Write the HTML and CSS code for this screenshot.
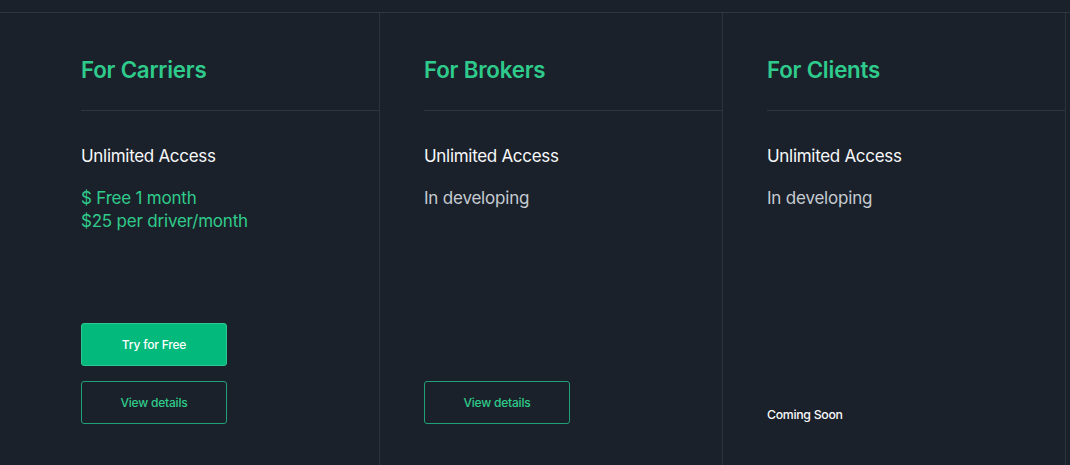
FILE: index.html
```html
<!DOCTYPE html>
<html lang="en">
<head>
<meta charset="utf-8">
<title>Pricing</title>
<link rel="stylesheet" href="styles.css">
</head>
<body>
<div class="page">
  <section class="plans">
    <div class="plan">
      <div class="plan-head"><h2 class="plan-title">For Carriers</h2></div>
      <div class="plan-body">
        <p class="plan-access">Unlimited Access</p>
        <p class="plan-price">$ Free 1 month<br>$25 per driver/month</p>
      </div>
      <div class="plan-actions">
        <a class="btn btn-primary" href="#">Try for Free</a>
        <a class="btn btn-outline" href="#">View details</a>
      </div>
    </div>
    <div class="plan">
      <div class="plan-head"><h2 class="plan-title">For Brokers</h2></div>
      <div class="plan-body">
        <p class="plan-access">Unlimited Access</p>
        <p class="plan-status">In developing</p>
      </div>
      <div class="plan-actions">
        <a class="btn btn-outline" href="#">View details</a>
      </div>
    </div>
    <div class="plan">
      <div class="plan-head"><h2 class="plan-title">For Clients</h2></div>
      <div class="plan-body">
        <p class="plan-access">Unlimited Access</p>
        <p class="plan-status">In developing</p>
      </div>
      <div class="plan-actions">
        <span class="plan-soon">Coming Soon</span>
      </div>
    </div>
  </section>
</div>
</body>
</html>
```
FILE: styles.css
```css
* { box-sizing: border-box; }
html, body {
  margin: 0;
  padding: 0;
  background: #1b212a;
  height: 100%;
}
body {
  font-family: Inter, "Liberation Sans", sans-serif;
  color: #f1f3f5;
  overflow: hidden;
}
.page {
  padding-top: 12px;
  height: 100%;
}
.plans {
  border-top: 1px solid #2f3640;
  padding-left: 37px;
  display: flex;
  height: 100%;
}
.plan {
  width: 343px;
  flex: none;
  border-right: 1px solid #2c333d;
  padding-left: 44px;
  padding-bottom: 41px;
  display: flex;
  flex-direction: column;
}
.plan-head {
  padding: 43px 0 26px;
  border-bottom: 1px solid #2f3640;
}
.plan-title {
  margin: 0;
  font-size: 22.3px;
  line-height: 28px;
  font-weight: 600;
  color: #2ecb8c;
  letter-spacing: -0.2px;
}
.plan-body {
  padding-top: 33px;
}
.plan-access {
  margin: 0;
  font-size: 17px;
  line-height: 24px;
  color: #f7f8fa;
  letter-spacing: -0.3px;
}
.plan-price, .plan-status {
  margin: 19px 0 0;
  font-size: 17px;
  line-height: 23px;
  letter-spacing: -0.2px;
}
.plan-price { color: #2fcb8b; }
.plan-status { color: #c6cbd2; }
.plan-actions {
  margin-top: auto;
  display: flex;
  flex-direction: column;
  align-items: flex-start;
  gap: 15px;
}
.btn {
  display: flex;
  align-items: center;
  justify-content: center;
  width: 146px;
  height: 43px;
  border-radius: 3px;
  font-size: 12px;
  font-weight: 500;
  text-decoration: none;
  letter-spacing: -0.2px;
}
.btn-primary {
  background: #03b97c;
  border: 1px solid #2cc991;
  color: #ffffff;
}
.btn-outline {
  border: 1px solid #20a078;
  color: #2fcb8b;
}
.plan-soon {
  font-size: 12.3px;
  line-height: 18px;
  font-weight: 500;
  color: #f7f8fa;
  letter-spacing: -0.3px;
}
```
